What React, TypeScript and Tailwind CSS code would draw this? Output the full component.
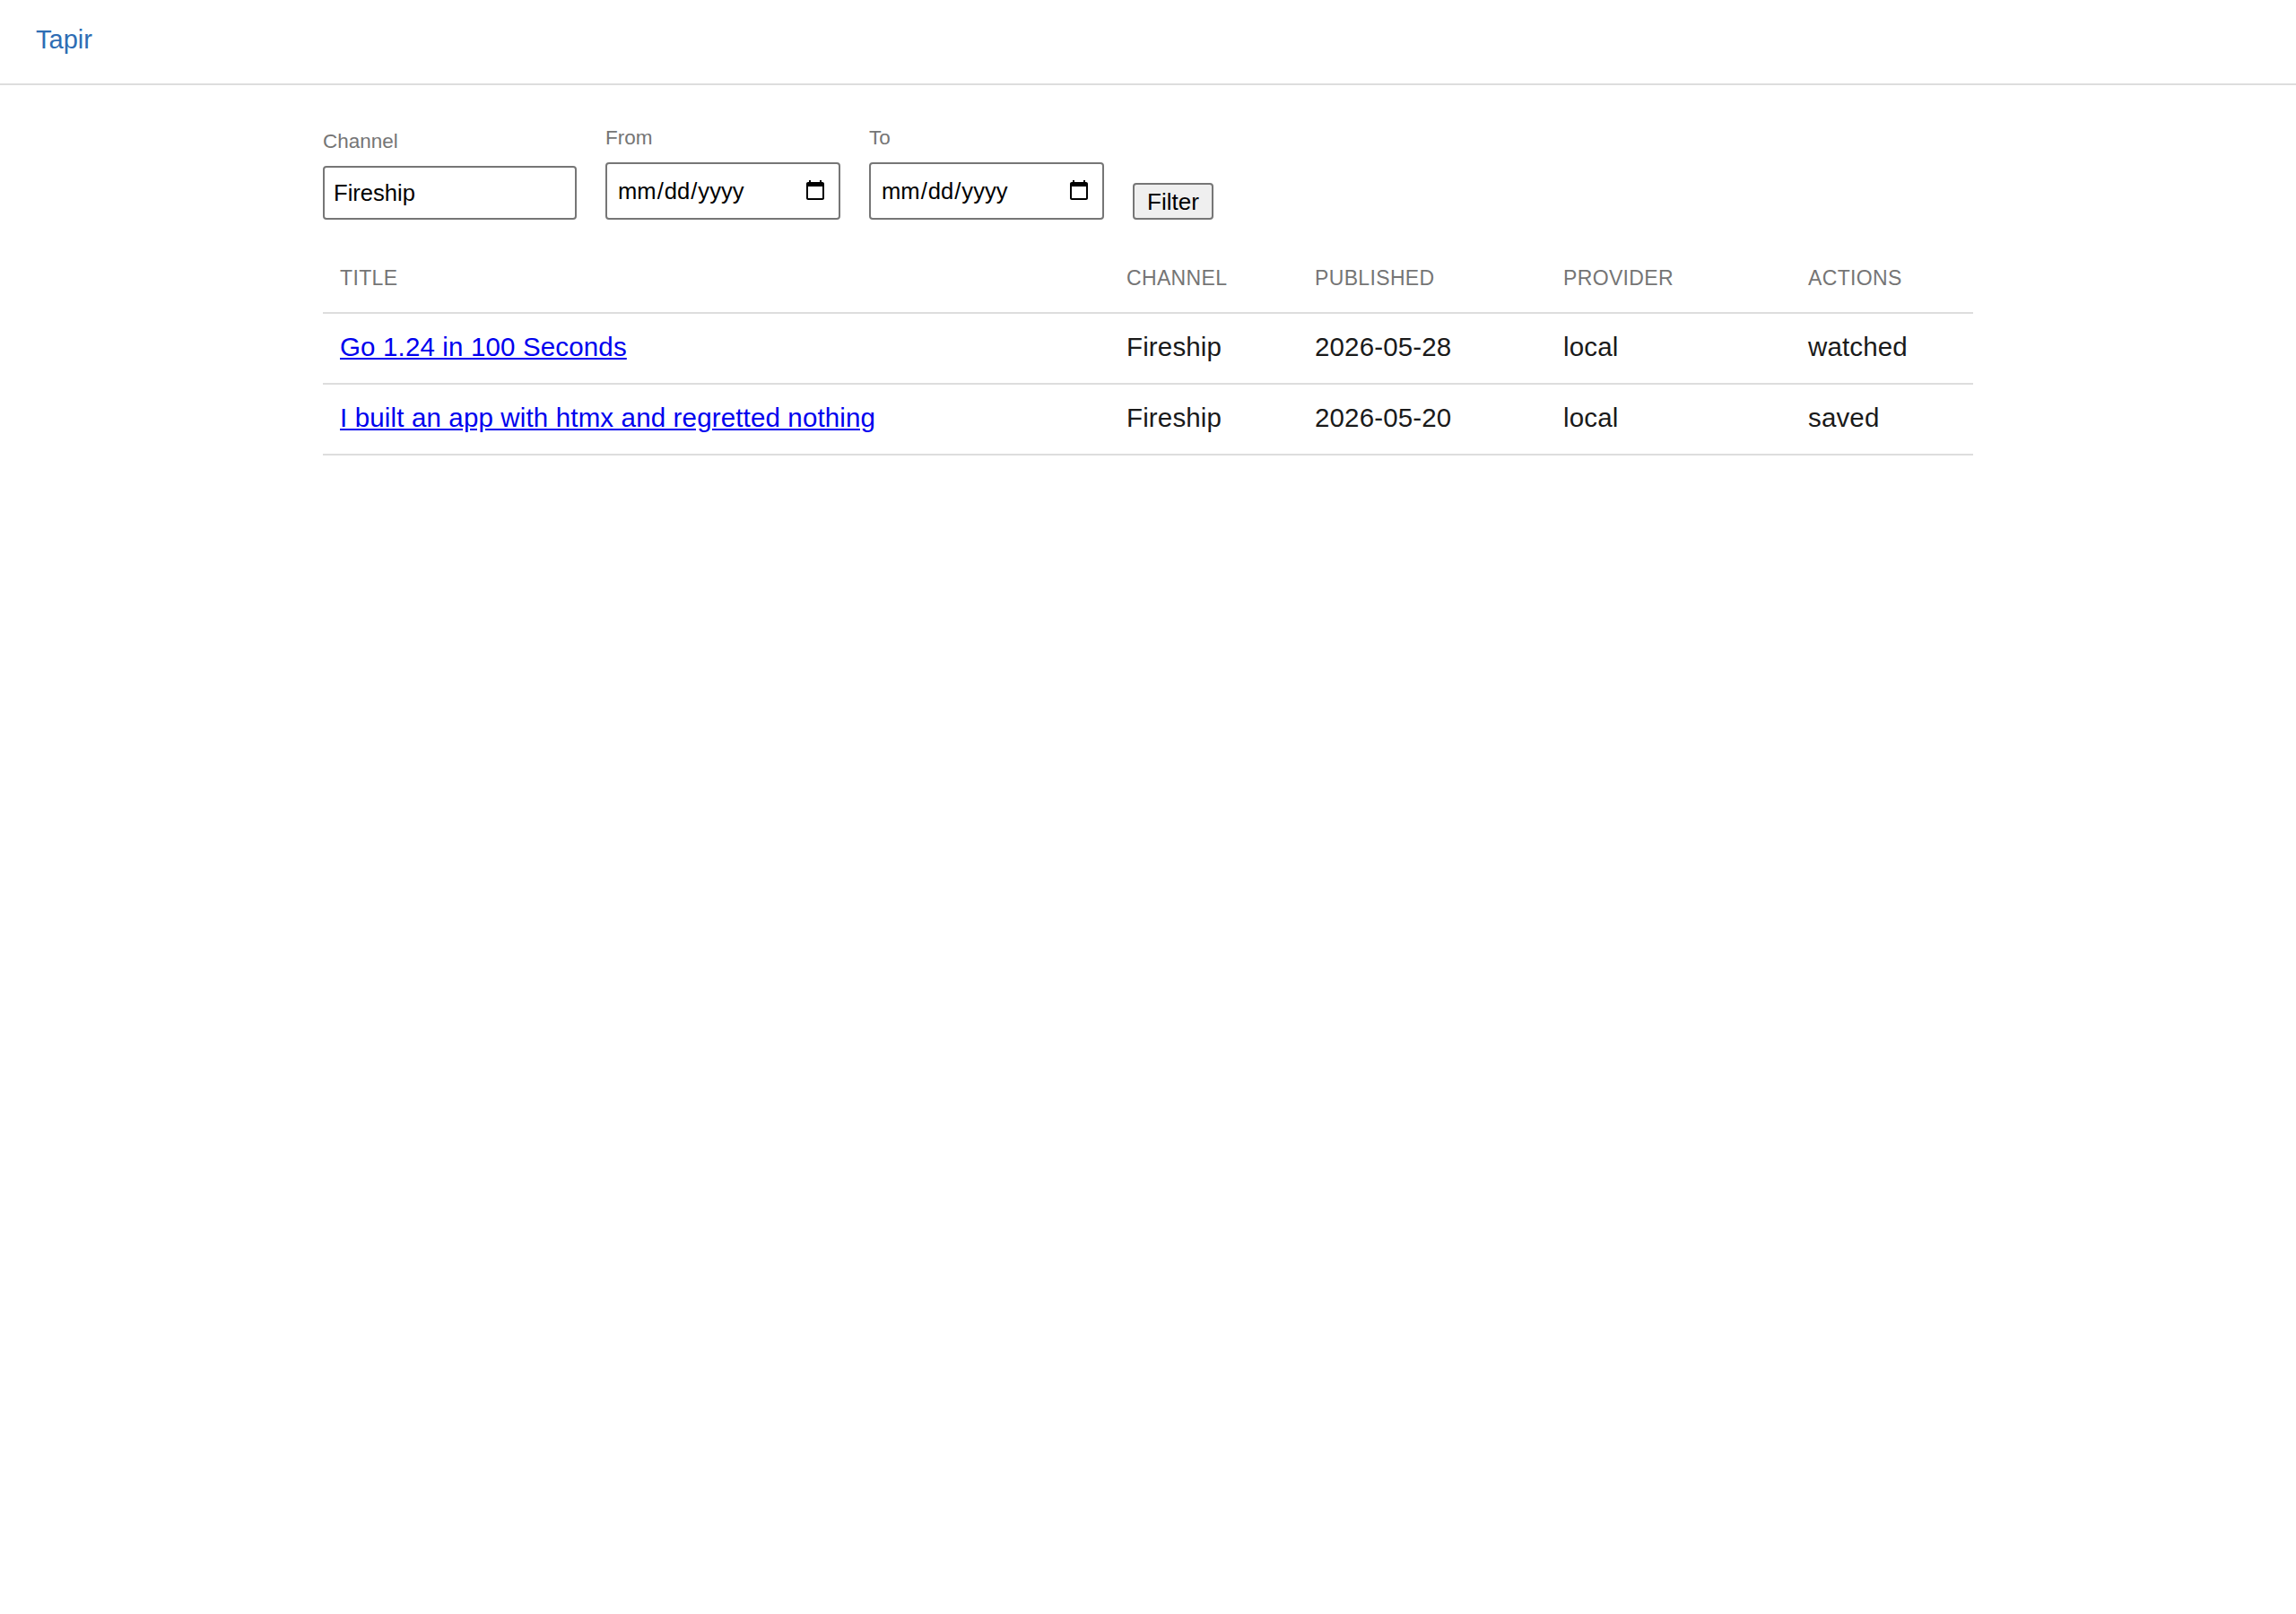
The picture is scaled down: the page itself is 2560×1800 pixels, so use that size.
import React from "react";

const rows = [
  { title: "Go 1.24 in 100 Seconds", channel: "Fireship", published: "2026-05-28", provider: "local", action: "watched" },
  { title: "I built an app with htmx and regretted nothing", channel: "Fireship", published: "2026-05-20", provider: "local", action: "saved" },
];

export default function App() {
  return (
    <div className="min-h-screen bg-white font-['Liberation_Sans',Arial,sans-serif]">
      <nav className="h-[95px] border-b-2 border-[#dddddd] px-[40px] flex items-center pb-[4px]">
        <a href="#" className="text-[29px] text-[#2e6db4] leading-none">Tapir</a>
      </nav>
      <main className="w-[1840px] mx-auto pt-[46px]">
        <form className="flex items-end gap-[32px]">
          <label className="flex flex-col">
            <span className="text-[22.5px] leading-[25px] text-[#757575] mb-[15px]">Channel</span>
            <input
              type="text"
              defaultValue="Fireship"
              className="w-[283px] h-[60px] border-2 border-[#767676] rounded-[4px] px-[10px] text-[25.6px] text-black outline-none"
            />
          </label>
          <label className="flex flex-col">
            <span className="text-[22.5px] leading-[25px] text-[#757575] mb-[15px]">From</span>
            <input
              type="date"
              className="w-[262px] h-[64px] border-2 border-[#767676] rounded-[4px] px-[11px] text-[25.6px] text-black outline-none"
            />
          </label>
          <label className="flex flex-col">
            <span className="text-[22.5px] leading-[25px] text-[#757575] mb-[15px]">To</span>
            <input
              type="date"
              className="w-[262px] h-[64px] border-2 border-[#767676] rounded-[4px] px-[11px] text-[25.6px] text-black outline-none"
            />
          </label>
          <button
            type="button"
            className="w-[90px] h-[41px] border-2 border-[#767676] rounded-[4px] bg-[#efefef] text-[26px] text-black leading-none"
          >
            Filter
          </button>
        </form>

        <div className="mt-[27px]">
          <div className="grid grid-cols-[877px_210px_277px_273px_203px] h-[78px] border-b-2 border-[#dddddd] items-center text-[23px] uppercase text-[#757575] tracking-[0.015em]">
            <div className="px-[19px]">Title</div>
            <div className="px-[19px]">Channel</div>
            <div className="px-[19px]">Published</div>
            <div className="px-[19px]">Provider</div>
            <div className="px-[19px]">Actions</div>
          </div>
          {rows.map((r) => (
            <div
              key={r.title}
              className="grid grid-cols-[877px_210px_277px_273px_203px] h-[79px] border-b-2 border-[#dddddd] items-center text-[29.5px] tracking-[0.005em] text-[#1a1a1a] pb-[3px]"
            >
              <div className="px-[19px]">
                <a href="#" className="text-[#0000ee] underline">{r.title}</a>
              </div>
              <div className="px-[19px]">{r.channel}</div>
              <div className="px-[19px]">{r.published}</div>
              <div className="px-[19px]">{r.provider}</div>
              <div className="px-[19px]">{r.action}</div>
            </div>
          ))}
        </div>
      </main>
    </div>
  );
}
